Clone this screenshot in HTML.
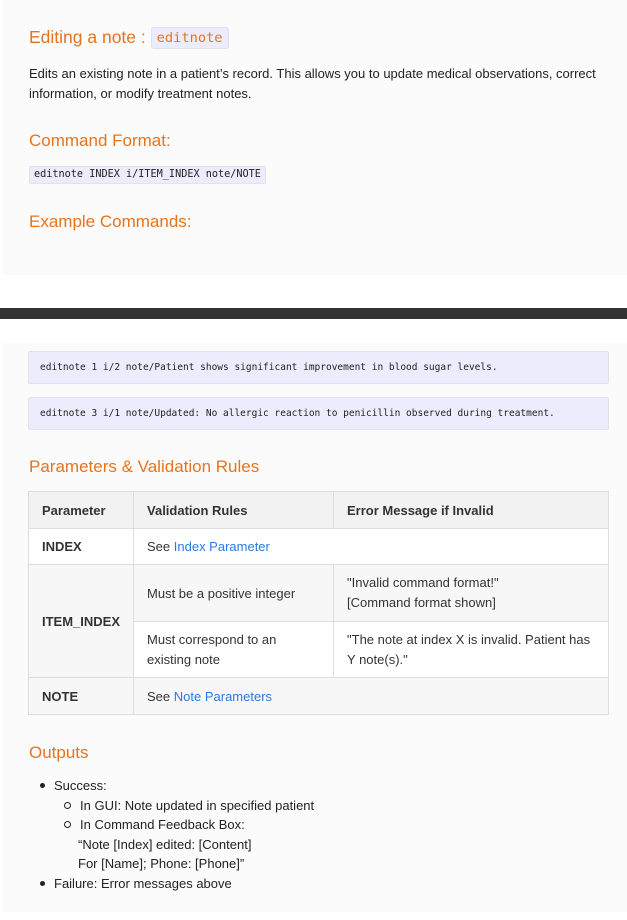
<!DOCTYPE html>
<html><head><meta charset="utf-8"><style>
body{margin:0;width:627px;height:920px;background:#fff;position:relative;font-family:"Liberation Sans",sans-serif;color:#222;overflow:hidden}
.card{position:absolute;left:3px;right:0;background:#fbfbfb}
.a{position:absolute}
h{position:absolute;color:#e8731c;font-size:17px;left:29px;white-space:nowrap}
.mono{font-family:"DejaVu Sans Mono","Liberation Mono",monospace}
p{margin:0}
.code{position:absolute;left:28px;width:581px;height:33px;background:#ececfc;border:1px solid #e2e2ee;border-radius:2px;box-sizing:border-box;font-size:9.5px;line-height:31px;padding-left:11px;color:#222}
table{position:absolute;left:28px;top:491px;width:581px;border-collapse:collapse;font-size:13px;color:#333}
td,th{border:1px solid #ddd;padding:0 13px;text-align:left;vertical-align:middle}
th{background:#f2f2f2;height:36px;font-weight:bold}
a{color:#2a7ae2;text-decoration:none}
.ring{display:inline-block;width:5px;height:5px;border:1px solid #222;border-radius:50%;margin:0 9px 2px 2px;vertical-align:middle}
.dot{display:inline-block;width:5px;height:5px;background:#222;border-radius:50%;margin:0 9px 2px 2px;vertical-align:middle}
</style></head><body>
<div class="card" style="top:0;height:275px"></div>
<div class="a" style="left:0;right:0;top:308px;height:11px;background:#333"></div>
<div class="card" style="top:343px;height:569px"></div>

<h style="top:27px;font-size:17.5px">Editing a note : <span class="mono" style="font-size:13.7px;background:#ececfc;border:1px solid #e2e2ee;border-radius:3px;padding:2px 5px;position:relative;top:-1px">editnote</span></h>
<p class="a" style="left:29px;top:64px;font-size:13px;line-height:20px;width:590px">Edits an existing note in a patient’s record. This allows you to update medical observations, correct information, or modify treatment notes.</p>
<h style="top:131px">Command Format:</h>
<span class="a mono" style="left:29px;top:166px;font-size:10.2px;background:#ececfc;border:1px solid #e2e2ee;border-radius:2px;padding:2px 4px;line-height:12px">editnote INDEX i/ITEM_INDEX note/NOTE</span>
<h style="top:212px">Example Commands:</h>

<div class="code mono" style="top:351px">editnote 1 i/2 note/Patient shows significant improvement in blood sugar levels.</div>
<div class="code mono" style="top:397px">editnote 3 i/1 note/Updated: No allergic reaction to penicillin observed during treatment.</div>
<h style="top:457px">Parameters &amp; Validation Rules</h>

<table>
<tr><th style="width:77px">Parameter</th><th style="width:173px">Validation Rules</th><th>Error Message if Invalid</th></tr>
<tr style="background:#fff"><td style="height:35px"><b>INDEX</b></td><td colspan="2">See <a>Index Parameter</a></td></tr>
<tr style="background:#f7f7f7"><td rowspan="2"><b>ITEM_INDEX</b></td><td style="height:56px">Must be a positive integer</td><td style="line-height:20px">"Invalid command format!"<br>[Command format shown]</td></tr>
<tr style="background:#fff"><td style="height:55px;line-height:20px">Must correspond to an existing note</td><td style="line-height:20px">"The note at index X is invalid. Patient has Y note(s)."</td></tr>
<tr style="background:#f7f7f7"><td style="height:36px"><b>NOTE</b></td><td colspan="2">See <a>Note Parameters</a></td></tr>
</table>

<h style="top:743px">Outputs</h>
<div class="a" style="left:38px;top:776px;font-size:13px;line-height:19.6px;color:#222">
<div><span class="dot"></span>Success:</div>
<div style="padding-left:24px"><span class="ring"></span>In GUI: Note updated in specified patient</div>
<div style="padding-left:24px"><span class="ring"></span>In Command Feedback Box:</div>
<div style="padding-left:40px">“Note [Index] edited: [Content]</div>
<div style="padding-left:40px">For [Name]; Phone: [Phone]”</div>
<div><span class="dot"></span>Failure: Error messages above</div>
</div>
</body></html>
